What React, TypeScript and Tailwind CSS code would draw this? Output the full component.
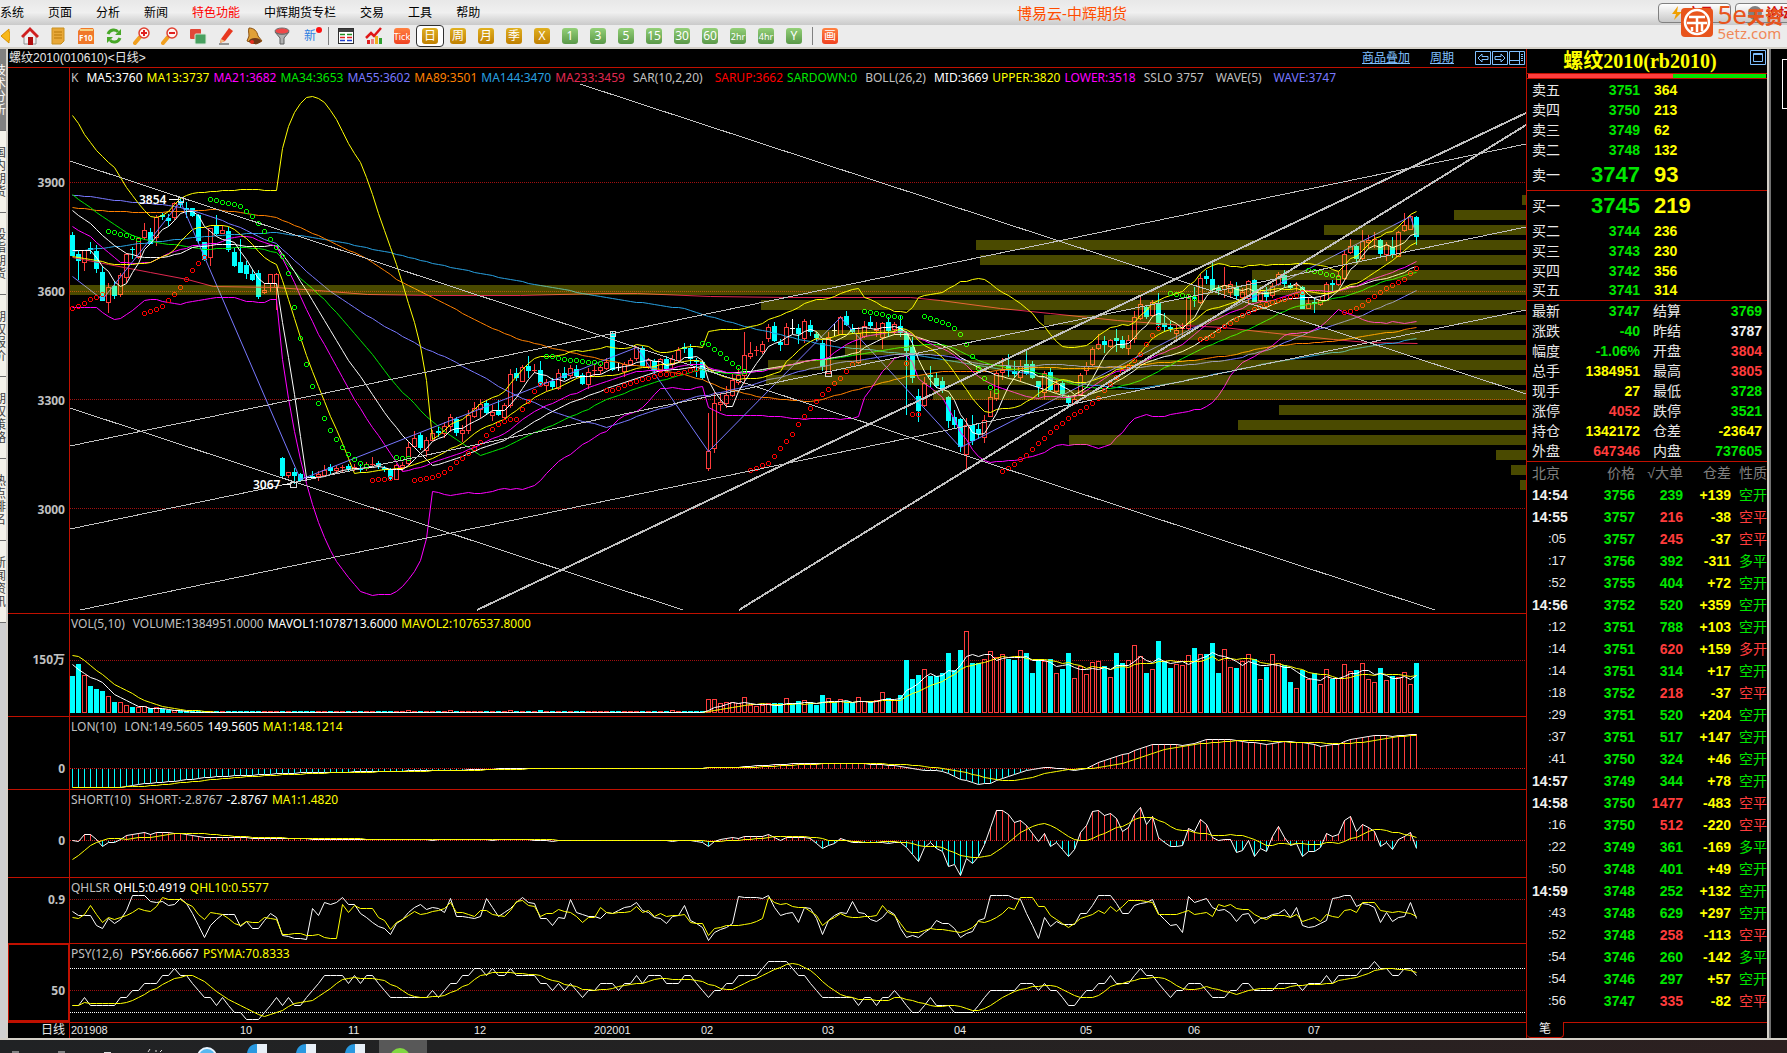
import type { ReactNode } from "react"
import clsx from "clsx"

type Point = [number, number]
// high, body top, body bottom, low (chart y) and kind: u = up, d = down, x = doji
type Candle = [number, number, number, number, string]

const BAR_COUNT = 225
const CHART_LEFT = 70
const CHART_WIDTH = 1456
const RIGHT = CHART_LEFT + CHART_WIDTH

const barX = (i: number) => 72.5 + i * 6

const candleData = `
232,235,256,256,d 251,254,261,280,d 250,250,262,271,u 242,248,250,254,d 245,251,269,273,d 266,272,301,301,d 283,287,302,313,u 281,286,296,299,d
273,275,294,297,u 253,254,277,283,u 247,249,250,259,d 237,238,257,259,u 223,230,237,240,u 228,232,244,244,d 215,217,237,246,u 213,215,217,220,d
214,218,221,226,d 202,203,217,220,u 197,201,205,208,d 202,208,210,218,d 208,208,216,217,d 214,215,241,243,d 242,242,260,261,d 228,228,257,266,u
215,226,234,235,d 225,230,233,234,u 227,231,250,252,d 248,252,266,267,d 239,262,273,273,d 261,265,274,279,d 269,274,280,281,d 270,273,297,299,d
283,290,292,294,u 274,274,283,292,u 273,274,287,310,u 457,458,476,477,d 472,472,475,478,u 468,472,476,484,d 473,474,481,482,d 476,477,478,481,x
471,476,477,478,d 471,474,476,481,u 465,470,475,477,u 464,467,471,475,d 466,468,470,474,u 465,467,468,473,u 464,466,469,471,d 464,467,468,471,u
464,468,470,473,d 462,464,468,471,u 457,464,465,467,u 461,463,466,469,d 466,468,470,472,d 468,469,479,480,d 464,465,479,480,u 462,465,467,471,u
442,447,463,465,u 431,438,446,448,u 433,435,448,450,d 437,440,450,457,u 430,433,440,441,u 427,431,433,437,d 422,426,433,438,u 414,417,426,432,u
417,419,433,436,d 425,430,433,442,u 410,415,430,434,u 402,408,416,418,u 399,404,409,418,u 400,403,413,415,d 405,412,415,421,u 400,410,415,416,d
403,405,417,419,u 369,374,405,408,u 368,373,378,381,d 365,367,381,381,u 356,366,371,378,d 364,370,371,373,u 361,370,384,385,d 379,382,385,391,u
378,381,387,390,d 369,373,388,390,u 367,373,378,380,d 365,368,375,378,u 365,369,376,378,d 373,375,384,385,d 368,372,384,389,u 365,370,371,376,u
364,367,370,374,u 358,362,368,370,u 331,334,370,371,d 363,367,368,371,x 362,364,371,377,u 358,360,364,366,u 346,347,358,361,u 346,348,366,366,d
358,360,366,369,u 359,361,371,372,d 358,359,371,372,u 356,359,369,370,d 355,359,364,369,u 347,350,360,362,u 343,347,349,353,d 344,348,359,364,d
358,360,362,377,d 361,362,378,380,d 413,451,468,471,u 392,403,448,453,u 393,402,404,411,u 386,395,403,408,u 374,380,395,397,u 368,375,382,385,u
332,355,375,384,u 342,353,356,359,u 346,350,351,356,u 341,344,351,354,u 324,327,338,342,u 322,326,341,342,d 339,342,345,351,d 323,327,344,345,u
319,328,329,334,x 324,328,334,344,d 319,321,338,343,u 320,325,332,336,d 332,334,338,341,d 340,343,367,371,d 332,337,373,374,u 324,330,331,336,x
316,317,334,335,u 311,316,325,326,d 324,329,332,334,d 327,333,362,364,u 321,326,336,338,u 316,322,326,328,d 322,328,330,337,u 322,323,337,349,u
317,322,331,337,d 322,324,329,335,u 315,326,333,337,d 331,333,351,415,d 337,347,378,383,d 389,396,411,422,d 377,383,405,407,u 366,375,377,387,d
372,378,386,388,d 377,381,390,393,d 396,397,421,428,d 410,417,425,428,d 418,419,447,452,d 418,425,454,471,u 415,425,441,445,d 424,429,434,439,d
415,420,437,443,u 391,397,416,417,u 371,373,398,401,u 358,370,372,380,u 354,366,369,377,d 361,371,374,378,d 360,366,377,382,u 351,364,374,375,d
361,364,378,379,d 381,381,387,397,d 371,373,392,399,u 368,372,390,391,d 380,384,391,393,u 381,383,394,397,d 395,397,403,408,d 396,399,403,405,u
373,375,394,396,u 362,366,370,375,u 347,349,364,367,u 334,344,348,350,u 336,341,345,353,d 339,340,346,348,u 329,338,341,352,d 336,340,348,349,d
335,340,348,355,u 311,317,338,343,u 297,304,318,320,u 305,307,317,319,d 300,302,315,317,u 293,303,325,328,d 313,323,327,332,d 321,327,329,332,d
325,330,333,339,u 323,328,329,337,u 295,297,328,330,u 287,297,299,307,d 274,278,302,304,u 270,276,279,284,d 263,279,290,292,d 285,288,291,295,d
267,285,289,298,u 281,284,292,297,u 282,287,296,299,d 288,292,297,300,u 280,281,298,305,u 279,280,302,302,d 290,292,300,303,u 287,292,297,301,d
283,286,295,298,u 272,274,284,286,u 270,275,284,287,d 283,285,288,289,d 282,285,286,291,u 286,287,309,309,d 297,303,308,309,u 298,302,304,313,d
297,300,304,306,u 282,284,300,301,u 280,283,285,291,d 272,276,284,286,u 251,254,278,280,u 239,246,252,254,u 245,246,259,262,d 230,241,258,260,u
235,240,242,248,u 232,239,240,248,u 239,240,254,258,d 242,245,254,261,u 237,247,255,258,d 231,232,256,257,u 213,225,230,232,u 215,216,229,230,u
216,217,237,245,d`

const candles: Candle[] = candleData
  .trim()
  .split(/\s+/)
  .map((row) => {
    const [high, top, bottom, low, kind] = row.split(",")
    return [+high, +top, +bottom, +low, kind]
  })

const closes = candles.map(([, top, bottom, , kind]) => (kind === "u" ? top : bottom))

function interpolate(points: Point[], x: number) {
  const next = points.findIndex((p) => p[0] >= x)
  if (next === -1) return points[points.length - 1][1]
  if (next === 0) return points[0][1]
  const [x0, y0] = points[next - 1]
  const [x1, y1] = points[next]
  return y0 + ((y1 - y0) * (x - x0)) / (x1 - x0)
}

function average(values: number[], i: number, period: number) {
  const part = values.slice(Math.max(0, i - period + 1), i + 1)
  return part.reduce((sum, v) => sum + v, 0) / part.length
}

// Moving average; `early` covers the bars that lack a full window
function movingAverage(values: number[], period: number, early: Point[] = []): Point[] {
  return values.map((_, i) => {
    const x = barX(i)
    const known = early.length > 0 && i < Math.max(period - 1, 0)
    return [x, known ? interpolate(early, x) : average(values, i, period)]
  })
}

function bollinger(side: number, early: Point[]): Point[] {
  return closes.map((_, i) => {
    const x = barX(i)
    if (i < 35) return [x, interpolate(early, x)]
    const part = closes.slice(i - 25, i + 1)
    const mean = part.reduce((s, v) => s + v, 0) / 26
    const deviation = Math.sqrt(part.reduce((s, v) => s + (v - mean) ** 2, 0) / 25)
    return [x, mean + side * 2 * deviation]
  })
}

const ma5 = movingAverage(closes, 5, [[72, 250], [90, 250]])
const ma13 = movingAverage(closes, 13, [[72, 256], [96, 260], [114, 264], [132, 264], [150, 262]])
const ma21 = movingAverage(closes, 21, [[72, 226], [90, 236], [102, 247], [120, 262], [138, 263], [150, 262], [168, 253], [192, 246]])
const mid = movingAverage(closes, 26, [[72, 210], [90, 223], [108, 240], [126, 253], [144, 257], [162, 257], [180, 253], [192, 247], [210, 245], [222, 244]])
const ma34 = movingAverage(closes, 34, [[72, 194], [90, 207], [108, 220], [126, 232], [144, 239], [162, 243], [180, 245], [204, 249], [222, 248], [240, 247], [258, 248], [276, 252]])
const ma55 = movingAverage(closes, 55, [[72, 195], [90, 196], [108, 199], [126, 201], [162, 204], [180, 207], [198, 212], [216, 218], [240, 227], [258, 236], [276, 243], [300, 265], [333, 293], [367, 315], [400, 335], [436, 351]])
const ma89 = movingAverage(closes, 89, [[72, 207], [108, 211], [150, 212], [180, 211], [216, 209], [246, 213], [276, 217], [300, 227], [333, 242], [368, 259], [400, 281], [433, 297], [467, 315], [493, 328], [520, 339], [554, 348], [593, 357], [606, 359]])
const ma144 = movingAverage(closes, 144, [[72, 251], [108, 247], [150, 242], [187, 238], [216, 235], [276, 232], [333, 240], [393, 253], [433, 263], [467, 270], [520, 281], [600, 296], [653, 304], [683, 308], [713, 317], [750, 327], [800, 339], [833, 346], [867, 349], [900, 353], [930, 357]])
const ma233: Point[] = [[72, 257], [108, 264], [150, 272], [187, 279], [213, 286], [276, 287], [317, 290], [367, 294], [433, 295], [520, 295], [600, 293], [637, 293], [710, 296], [787, 297], [910, 297], [940, 300], [1000, 308], [1050, 313], [1117, 320], [1183, 325], [1223, 327], [1267, 332], [1333, 339], [1367, 342], [1417, 343]]
const upper = bollinger(-1, [[72, 114], [78, 122], [84, 133], [96, 149], [108, 162], [114, 166], [126, 186], [138, 202], [150, 216], [156, 217], [162, 215], [168, 212], [180, 198], [192, 193], [204, 192], [222, 190], [252, 189], [276, 190]])
const lower = bollinger(1, [[72, 307], [96, 307], [108, 316], [114, 319], [120, 318], [132, 310], [144, 300], [156, 299], [168, 302], [180, 304], [186, 302], [204, 299], [216, 297], [234, 297], [246, 301], [264, 302], [270, 299], [276, 299]])
const wave: Point[] = [[72, 276], [102, 299], [180, 201], [300, 479], [636, 347], [708, 451], [840, 317], [960, 447], [1410, 216], [1416, 235]]

const sarRuns: { start: number; up: boolean; ys: number[] }[] = [
  { start: 0, up: false, ys: [308, 306, 303, 299, 297, 294] },
  { start: 6, up: true, ys: [231, 232, 234, 235, 237, 239] },
  { start: 12, up: false, ys: [313, 311, 309, 306, 300, 294, 287, 279, 270, 263, 257] },
  { start: 23, up: true, ys: [199, 200, 202, 203, 204, 206, 211, 216, 223, 231, 239, 247, 256, 273, 307, 338, 364, 386, 403, 418, 430, 439, 447, 454, 459, 463, 466] },
  { start: 50, up: false, ys: [480, 479, 479, 478] },
  { start: 54, up: true, ys: [457, 458, 458] },
  { start: 57, up: false, ys: [480, 479, 478, 477, 475, 472, 468, 462, 458, 453, 448, 442, 435, 429, 424, 421, 419, 419, 409, 401, 391, 384] },
  { start: 79, up: true, ys: [356, 356, 358, 359, 360, 360, 361, 362, 362, 363] },
  { start: 89, up: false, ys: [390, 390, 388, 385, 383, 381, 379, 378, 376, 374, 374, 374, 373, 372, 370, 369] },
  { start: 105, up: true, ys: [343, 344, 349, 353, 358, 363, 367, 371] },
  { start: 113, up: false, ys: [470, 468, 465, 463, 456, 448, 441, 434, 424, 416, 408, 401, 394, 389, 383, 378, 371, 364] },
  { start: 132, up: true, ys: [311, 312, 313, 314, 316, 316, 317] },
  { start: 139, up: false, ys: [363, 414, 414] },
  { start: 142, up: true, ys: [316, 318, 320, 322, 324, 328, 334, 344, 356, 368, 378, 387, 391] },
  { start: 155, up: false, ys: [471, 468, 464, 459, 455, 449, 443, 438, 432, 427, 423, 418, 414, 411, 407, 403, 398, 390, 384, 377, 371, 366, 360, 354, 344, 335, 328] },
  { start: 183, up: true, ys: [293, 294, 295, 296, 298] },
  { start: 188, up: false, ys: [339, 338, 335, 330, 326, 323, 319, 315, 312, 309, 306, 304, 302, 300, 299, 297, 295, 292] },
  { start: 206, up: true, ys: [270, 271, 272, 274, 275, 277] },
  { start: 212, up: false, ys: [312, 311, 308, 305, 300, 296, 292, 288, 285, 282, 279, 273, 268] },
]

// left edge of every price band, top to bottom, 15 apart
const profile = [1522, 1454, 1324, 976, 980, 1252, 70, 761, 1044, 815, 845, 768, 766, 933, 1279, 1238, 1069, 1496, 1511, 1520]

const trendLines = [
  [70, 161, 1435, 610],
  [70, 408, 683, 610],
  [580, 84, 1526, 394],
  [70, 446, 1526, 144],
  [70, 529, 1526, 227],
  [80, 610, 1526, 310],
]
const thickLines = [
  [477, 610, 1526, 113],
  [739, 610, 1526, 125],
]

const volumes = [
  36, 48, 37, 26, 23, 21, 16, 10, 10, 7, 5, 5, 6, 4, 5, 3, 2, 2,
  ...Array.from({ length: 88 }, (_, k) => ([38, 45, 55, 60, 82].includes(k) ? 2 : 1)),
  13, 13, 9, 10, 10, 9, 15, 7, 6, 7, 9, 9, 9, 14, 9, 11, 12, 10, 7, 17, 14, 10, 13, 11, 9, 15, 11, 11, 12, 20, 14, 12, 17,
  52, 33, 37, 43, 36, 36, 39, 59, 42, 62,
  81, 49, 49, 53, 61, 55, 58, 53, 52, 62,
  59, 39, 53, 51, 53, 39, 43, 59, 34, 46,
  38, 50, 51, 46, 35, 59, 49, 52, 67, 56,
  39, 43, 71, 51, 44, 48, 47, 57, 64, 58,
  58, 69, 39, 63, 45, 44, 51, 58, 53, 33,
  45, 58, 49, 47, 30, 24, 42, 33, 39, 28,
  43, 33, 34, 48, 41, 42, 49, 33, 30, 44,
  32, 36, 35, 40, 28, 49,
]
const volumeTops = volumes.map((v) => 713 - v)
const mavol1 = movingAverage(volumeTops, 5, [[72, 664], [84, 673], [96, 680]])
const mavol2 = movingAverage(volumeTops, 10, [[72, 655], [78, 656], [84, 660], [96, 670], [102, 674], [114, 684], [126, 690]])

const expand = (points: Point[]) => Array.from({ length: BAR_COUNT }, (_, i) => interpolate(points, i))

const lon = expand([
  [0, -18], [8, -18], [9, -17], [13, -14], [17, -12], [23, -8], [30, -6], [37, -4], [46, -3], [55, -2], [65, -1], [76, 1],
  [105, 1], [111, 2], [116, 4], [123, 6], [133, 5], [138, 3], [142, -1], [145, -2], [148, -10], [151, -15], [153, -14],
  [156, -7], [160, 0], [162, 2], [167, -1], [169, 1], [171, 7], [174, 13], [176, 16], [179, 23], [180, 25], [183, 25],
  [185, 24], [187, 26], [189, 30], [193, 30], [196, 27], [199, 25], [202, 28], [206, 26], [208, 23], [211, 25], [213, 30],
  [217, 34], [220, 33], [224, 35],
])

const short = [
  ...expand([
    [0, 1], [1, 0], [2, 7], [3, 7], [4, 2], [5, -5], [6, -1], [7, -1], [8, 2], [9, 6], [10, 7], [12, 9], [13, 7], [14, 9],
    [15, 9], [19, 7], [22, 4], [26, 4], [30, 3], [40, 2], [50, 2], [60, 1], [66, 2], [70, 1], [73, 2], [80, 0], [95, 1],
    [100, 0], [102, 1], [104, 0], [105, -1], [106, -5], [107, 0], [109, 3], [110, 4], [111, 3], [112, 5], [115, 5],
    [116, 7], [118, 1], [119, 4], [123, 3], [124, -2], [125, -7], [127, -2], [128, 3], [130, -1], [134, -1], [136, -2],
    [138, -1],
  ]).slice(0, 139),
  -6, -13, -20, -6, -1, -7, -10, -25, -23, -34, -17, -22, -15, -3, 14, 31, 31, 27, 19, 21, 16, 8, 0, 8, -5, -1, -8, -15,
  -8, 9, 16, 30, 31, 26, 28, 23, 10, 14, 27, 34, 17, 25, 4, -1, -5, -5, -4, 13, 10, 22, 17, 4, 1, 2, 2, -11, -9, 1, -15,
  -7, -10, 5, 15, 4, -4, -2, -15, -10, -10, -6, 8, 5, 7, 21, 25, 10, 17, 14, 10, -5, -1, -8, 2, 5, 9, -7,
]

const qhl5 = [
  911, 915, 915, 915, 925, 928, 918, 923, 919, 910, 895, 895, 895, 901, 902, 901, 905, 904, 898, 903, 913, 925, 937, 925,
  919, 914, 914, 914, 926, 921, 928, 928, 920, 913, 917, 935, 936, 938, 938, 939, 908, 915, 902, 904, 902, 897, 904, 904,
  913, 917, 922, 926, 928, 934, 923, 919, 912, 907, 904, 909, 907, 908, 912, 898, 916, 916, 917, 918, 916, 898, 907, 916,
  912, 908, 902, 897, 902, 903, 918, 918, 925, 917, 918, 899, 912, 914, 916, 916, 918, 912, 913, 910, 907, 906, 902, 910,
  912, 917, 918, 923, 916, 915, 905, 920, 923, 927, 940, 932, 929, 927, 923, 896, 897, 897, 897, 898, 895, 907, 915, 913,
  912, 922, 907, 908, 918, 934, 920, 915, 912, 913, 901, 912, 913, 919, 921, 917, 910, 914, 928, 937, 935, 937, 932, 928,
  920, 923, 923, 928, 937, 933, 931, 920, 918, 895, 895, 895, 895, 898, 899, 913, 925, 938, 917, 926, 921, 924, 924, 924,
  913, 913, 905, 895, 895, 895, 903, 913, 913, 905, 903, 902, 899, 913, 919, 925, 924, 932, 896, 902, 900, 898, 907, 910,
  909, 913, 921, 914, 913, 923, 918, 917, 914, 913, 909, 917, 907, 925, 927, 926, 923, 920, 898, 897, 895, 895, 906, 903,
  904, 907, 922, 912, 921, 917, 916, 902, 918,
]

const qhl10 = expand([
  [0, 917], [1, 918], [2, 914], [3, 905], [4, 914], [5, 922], [6, 917], [7, 919], [9, 915], [11, 908], [13, 911], [14, 906],
  [15, 897], [16, 899], [18, 899], [19, 903], [20, 906], [21, 914], [22, 919], [23, 912], [25, 914], [26, 918], [27, 923],
  [28, 925], [29, 921], [31, 922], [32, 917], [34, 919], [35, 934], [38, 933], [39, 935], [41, 934], [42, 937], [44, 938],
  [45, 904], [46, 912], [47, 905], [48, 908], [50, 908], [51, 917], [52, 920], [53, 929], [54, 922], [55, 919], [57, 911],
  [58, 914], [61, 910], [62, 908], [63, 902], [64, 912], [65, 912], [67, 916], [68, 910], [69, 910], [70, 914], [72, 916],
  [73, 910], [74, 901], [75, 900], [76, 905], [77, 906], [78, 916], [79, 913], [80, 913], [81, 909], [83, 912], [84, 916],
  [85, 922], [86, 917], [87, 917], [88, 907], [89, 912], [90, 913], [93, 911], [94, 906], [95, 912], [96, 910], [97, 916],
  [98, 913], [99, 916], [102, 914], [103, 922], [105, 923], [106, 935], [107, 928], [109, 925], [111, 925], [113, 923],
  [115, 918], [116, 897], [117, 902], [118, 904], [119, 903], [120, 906], [122, 907], [124, 915], [125, 925], [126, 920],
  [128, 913], [129, 916], [131, 917], [134, 915], [135, 905], [136, 912], [137, 915], [138, 923], [139, 931], [141, 932],
  [143, 928], [146, 930], [148, 932], [150, 927], [151, 921], [152, 922], [154, 917], [155, 913], [156, 907], [157, 909],
  [158, 897], [160, 897], [161, 906], [162, 906], [163, 915], [165, 923], [166, 927], [168, 918], [170, 914], [171, 910],
  [172, 913], [173, 906], [174, 911], [176, 900], [178, 900], [180, 902], [181, 914], [184, 914], [186, 910], [187, 914],
  [189, 912], [190, 916], [191, 904], [192, 906], [193, 904], [194, 908], [196, 909], [197, 914], [199, 919], [200, 915],
  [202, 915], [203, 917], [204, 914], [205, 921], [207, 917], [208, 921], [209, 914], [211, 917], [212, 910], [213, 909],
  [214, 912], [215, 902], [217, 902], [218, 910], [220, 912], [221, 911], [223, 913], [224, 916],
])

// rising days out of the last twelve, one hex digit per bar
const psyDays =
  "44544444556677788988765545433222345454456788887878876555555565677889989889888877" +
  "67676566777677878887778876566778888" +
  "9aaaa988765555554554556543345444333345666667776766544566778777898876566777655566776666777767778" +
  "7888899a9988998"
const psy = [...psyDays].map((digit) => 1034 - parseInt(digit, 16) * 7.33)

const toPoints = (values: number[], base = 0): Point[] => values.map((v, i) => [barX(i), base ? base - v : v])

// points sit on pixel centres so that flat stretches stay sharp
function Line({ points, color }: { points: Point[]; color: string }) {
  return (
    <polyline
      points={points.map(([x, y]) => `${Math.floor(x) + 0.5},${Math.round(y) + 0.5}`).join(" ")}
      fill="none"
      stroke={color}
      shapeRendering="auto"
    />
  )
}

function GridLine({ y, color = "#a01010" }: { y: number; color?: string }) {
  return <line x1={CHART_LEFT} x2={RIGHT} y1={y + 0.5} y2={y + 0.5} stroke={color} strokeDasharray="1 1" />
}

function Stems({ values, base }: { values: number[]; base: number }) {
  return (
    <>
      {values.map((v, i) => (
        <line key={i} x1={barX(i)} x2={barX(i)} y1={base} y2={base - v} stroke={v >= 0 ? "#ff3c3c" : "#00ffff"} />
      ))}
    </>
  )
}

function CandleShape({ candle, index }: { candle: Candle; index: number }) {
  const [high, top, bottom, low, kind] = candle
  const x = barX(index)
  if (kind === "x" || (kind === "u" && bottom - top < 2)) {
    const color = kind === "x" ? "#ffffff" : "#ff3c3c"
    return <path d={`M${x} ${high}V${low}M${x - 2.5} ${top + 0.5}H${x + 2.5}`} stroke={color} />
  }
  if (kind === "u") {
    return (
      <path
        d={`M${x} ${high}V${top}M${x} ${bottom}V${low}M${x - 2} ${top + 0.5}H${x + 2}V${bottom + 0.5}H${x - 2}Z`}
        fill="none"
        stroke="#ff3c3c"
      />
    )
  }
  return (
    <g>
      <line x1={x} x2={x} y1={high} y2={low} stroke="#00ffff" />
      <rect x={x - 2.5} y={top} width={5} height={bottom - top} fill="#00ffff" />
    </g>
  )
}

interface PanelProps {
  top: number
  height: number
  labels: string[]
  labelClass: string
  header: [string, string][]
  active?: boolean
  children: ReactNode
}

function Panel({ top, height, labels, labelClass, header, active, children }: PanelProps) {
  return (
    <section className="flex min-h-0 border-t border-[#c01000]">
      <div
        className={clsx(
          "flex w-[62px] shrink-0 flex-col border-[#c01000] text-right text-[12px] leading-[14px] font-bold text-[#c0c0c0]",
          active ? "border border-r-2 border-b-2 pr-[3px]" : "border-r pr-1",
          labelClass
        )}
      >
        {labels.map((label) => (
          <span key={label}>{label}</span>
        ))}
      </div>
      <div className="relative min-w-0 flex-1">
        <svg
          className="absolute inset-0 h-full w-full"
          viewBox={`${CHART_LEFT} ${top} ${CHART_WIDTH} ${height}`}
          preserveAspectRatio="none"
          shapeRendering="crispEdges"
        >
          {children}
        </svg>
        <p className="absolute top-[3px] left-px flex gap-1 text-[12px] leading-[14px] whitespace-nowrap">
          {header.map(([text, color], i) => (
            <span key={i} className={color}>
              {text}
            </span>
          ))}
        </p>
      </div>
    </section>
  )
}

const GRAY = "text-[#c0c0c0]"
const TITLE = "text-[#c0c0c0] mr-1"
const WHITE = "text-white"
const YELLOW = "text-[#ffff00]"
const MAGENTA = "text-[#ff00ff]"
const GREEN = "text-[#00e600]"
const RED = "text-[#ff3c3c]"

const mainHeader: [string, string][] = [
  ["K", TITLE],
  ["MA5:3760", WHITE],
  ["MA13:3737", YELLOW],
  ["MA21:3682", MAGENTA],
  ["MA34:3653", GREEN],
  ["MA55:3602", "text-[#7878ff]"],
  ["MA89:3501", "text-[#ff8000]"],
  ["MA144:3470", "text-[#28a0e0]"],
  ["MA233:3459", "text-[#e02850] mr-1"],
  ["SAR(10,2,20)", "text-[#c0c0c0] mr-2"],
  ["SARUP:3662", "text-[#ff0000]"],
  ["SARDOWN:0", "text-[#00e600] mr-1"],
  ["BOLL(26,2)", TITLE],
  ["MID:3669", WHITE],
  ["UPPER:3820", YELLOW],
  ["LOWER:3518", "text-[#ff00ff] mr-1"],
  ["SSLO", GRAY],
  ["3757", "text-[#c0c0c0] mr-2"],
  ["WAVE(5)", "text-[#c0c0c0] mr-2"],
  ["WAVE:3747", "text-[#7878ff]"],
]

function PriceChart() {
  return (
    <Panel
      top={68}
      height={545}
      labels={["3900", "3600", "3300", "3000"]}
      labelClass="gap-[95px] pt-[108px]"
      header={mainHeader}
    >
      {[182, 291, 399, 508].map((y) => (
        <GridLine key={y} y={y} />
      ))}
      {candles.map((candle, i) => (
        <CandleShape key={i} candle={candle} index={i} />
      ))}
      <Line points={ma233} color="#e02850" />
      <Line points={ma144} color="#28a0e0" />
      <Line points={ma89} color="#ff8000" />
      <Line points={ma55} color="#7878ff" />
      <Line points={ma34} color="#00e600" />
      <Line points={mid} color="#ffffff" />
      <Line points={ma21} color="#ff00ff" />
      <Line points={ma13} color="#ffff00" />
      <Line points={ma5} color="#ffffff" />
      <Line points={upper} color="#ffff00" />
      <Line points={lower} color="#ff00ff" />
      <Line points={wave} color="#7878ff" />
      {sarRuns.map((run) =>
        run.ys.map((y, k) => (
          <circle
            key={`${run.start}-${k}`}
            cx={barX(run.start + k)}
            cy={y + 0.5}
            r={2}
            fill="none"
            stroke={run.up ? "#00ff00" : "#ff0000"}
          />
        ))
      )}
      {profile.map((x, i) => (
        <rect key={i} x={x} y={195 + i * 15} width={RIGHT - x} height={10} fill="#ffff00" opacity={0.29} />
      ))}
      {trendLines.map(([x1, y1, x2, y2], i) => (
        <line key={i} x1={x1} y1={y1} x2={x2} y2={y2} stroke="#c0c0c0" />
      ))}
      {thickLines.map(([x1, y1, x2, y2], i) => (
        <line key={i} x1={x1} y1={y1} x2={x2} y2={y2} stroke="#c0c0c0" strokeWidth={2} />
      ))}
      <path d="M169 199.5H178M283 484.5H290" stroke="#ffffff" />
      <path d="M178 197h5v5h-5zM290 482h6v5h-6zM610 331h5v5h-5zM825 371h6v5h-6z" fill="none" stroke="#d8d8d8" />
      <text x={139} y={204} fill="#ffffff" fontSize={12} className="font-semibold">
        3854
      </text>
      <text x={253} y={489} fill="#ffffff" fontSize={12} className="font-semibold">
        3067
      </text>
    </Panel>
  )
}

function VolumeChart() {
  return (
    <Panel
      top={614}
      height={102}
      labels={["150万"]}
      labelClass="pt-[39px]"
      header={[
        ["VOL(5,10)", TITLE],
        ["VOLUME:1384951.0000", GRAY],
        ["MAVOL1:1078713.6000", WHITE],
        ["MAVOL2:1076537.8000", YELLOW],
      ]}
    >
      <GridLine y={660} />
      {volumes.map((v, i) =>
        candles[i][4] === "u" ? (
          <rect key={i} x={barX(i) - 2} y={712.5 - v} width={4} height={v} fill="none" stroke="#ff3c3c" />
        ) : (
          <rect key={i} x={barX(i) - 2.5} y={712 - v} width={5} height={v + 1} fill="#00ffff" />
        )
      )}
      <Line points={mavol2} color="#ffff00" />
      <Line points={mavol1} color="#ffffff" />
    </Panel>
  )
}

function LonChart() {
  return (
    <Panel
      top={717}
      height={72}
      labels={["0"]}
      labelClass="pt-[45px]"
      header={[
        ["LON(10)", TITLE],
        ["LON:149.5605", GRAY],
        ["149.5605", WHITE],
        ["MA1:148.1214", YELLOW],
      ]}
    >
      <GridLine y={768} color="#d01818" />
      <Stems values={lon} base={768.5} />
      <Line points={toPoints(lon, 768.5)} color="#ffffff" />
      <Line points={movingAverage(lon.map((v) => 768.5 - v), 10)} color="#ffff00" />
    </Panel>
  )
}

function ShortChart() {
  return (
    <Panel
      top={790}
      height={87}
      labels={["0"]}
      labelClass="pt-[44px]"
      header={[
        ["SHORT(10)", TITLE],
        ["SHORT:-2.8767", GRAY],
        ["-2.8767", WHITE],
        ["MA1:1.4820", YELLOW],
      ]}
    >
      <GridLine y={840} color="#d01818" />
      <Stems values={short} base={840.5} />
      <Line points={toPoints(short, 840.5)} color="#ffffff" />
      <Line
        points={movingAverage(short.map((v) => 840.5 - v), 10, [[72, 859], [78, 855], [84, 850], [90, 845], [108, 838], [126, 838]])}
        color="#ffff00"
      />
    </Panel>
  )
}

function QhlsrChart() {
  return (
    <Panel
      top={878}
      height={65}
      labels={["0.9"]}
      labelClass="pt-[15px]"
      header={[
        ["QHLSR", GRAY],
        ["QHL5:0.4919", WHITE],
        ["QHL10:0.5577", YELLOW],
      ]}
    >
      <GridLine y={899} />
      <Line points={toPoints(qhl5)} color="#ffffff" />
      <Line points={toPoints(qhl10)} color="#ffff00" />
    </Panel>
  )
}

function PsyChart() {
  return (
    <Panel
      top={944}
      height={78}
      labels={["50"]}
      labelClass="pt-[39px]"
      active
      header={[
        ["PSY(12,6)", TITLE],
        ["PSY:66.6667", WHITE],
        ["PSYMA:70.8333", YELLOW],
      ]}
    >
      <GridLine y={968} color="#ffffff" />
      <GridLine y={990} />
      <GridLine y={1012} color="#ffffff" />
      <Line points={toPoints(psy)} color="#ffffff" />
      <Line points={movingAverage(psy, 6)} color="#ffff00" />
    </Panel>
  )
}

// month label and the chart x where it starts
const months: [string, number][] = [
  ["201908", 70], ["10", 239], ["11", 347], ["12", 473], ["202001", 593], ["02", 700], ["03", 821], ["04", 953], ["05", 1079], ["06", 1187], ["07", 1307],
]

function TimeAxis() {
  return (
    <div className="flex border-t border-[#c01000] font-['Liberation_Sans','Noto_Sans_CJK_SC',sans-serif] text-[11px] leading-[15px] text-[#e8e8e8]">
      <span className="w-[62px] shrink-0 border-r border-[#c01000] pr-1 text-right text-[12px]">日线</span>
      <div className="flex min-w-0 flex-1">
        {months.map(([label, x], i) => (
          <span
            key={label}
            className="shrink-0 pl-px"
            style={{ width: `${(((months[i + 1]?.[1] ?? RIGHT) - x) / CHART_WIDTH) * 100}%` }}
          >
            {label}
          </span>
        ))}
      </div>
    </div>
  )
}

function ChartArea() {
  return (
    <main className="grid min-w-0 flex-1 grid-rows-[18px_546fr_103fr_73fr_88fr_66fr_79fr_16px] bg-black">
      <div className="flex items-center font-['Liberation_Sans','Noto_Sans_CJK_SC',sans-serif] text-[12px] leading-[16px] text-[#e8e8e8]">
        <h1 className="pl-px">螺纹2010(010610)&lt;日线&gt;</h1>
        <a href="#overlay" className="mr-5 ml-auto text-[#80c0ff] underline">
          商品叠加
        </a>
        <a href="#period" className="mr-[21px] text-[#80c0ff] underline">
          周期
        </a>
        <button type="button" aria-label="左移" className="text-[#80c0ff]">
          <svg width="17" height="15" viewBox="0 0 17 15" fill="none" stroke="currentColor">
            <path d="M.5 .5h15v13H.5zM3 7l4-4v2.500h6v3H7V11z" />
          </svg>
        </button>
        <button type="button" aria-label="右移" className="text-[#80c0ff]">
          <svg width="17" height="15" viewBox="0 0 17 15" fill="none" stroke="currentColor">
            <path d="M.5 .5h15v13H.5zM13 7L9 3v2.500H3v3h6V11z" />
          </svg>
        </button>
        <button type="button" aria-label="布局" className="text-[#80c0ff]">
          <svg width="17" height="15" viewBox="0 0 17 15" fill="none" stroke="currentColor">
            <path d="M.5 .5h15v13H.5zM10.500 .5v13M.5 9.500h10M12 3.500h2M12 5.500h2M12 7.500h2M12 9.500h2" />
          </svg>
        </button>
      </div>
      <PriceChart />
      <VolumeChart />
      <LonChart />
      <ShortChart />
      <QhlsrChart />
      <PsyChart />
      <TimeAxis />
    </main>
  )
}

const asks = [
  ["卖五", "3751", "364"],
  ["卖四", "3750", "213"],
  ["卖三", "3749", "62"],
  ["卖二", "3748", "132"],
  ["卖一", "3747", "93"],
]
const bids = [
  ["买一", "3745", "219"],
  ["买二", "3744", "236"],
  ["买三", "3743", "230"],
  ["买四", "3742", "356"],
  ["买五", "3741", "314"],
]

const stats = [
  ["最新", "3747", GREEN, "结算", "3769", GREEN],
  ["涨跌", "-40", GREEN, "昨结", "3787", "text-[#f0f0f0]"],
  ["幅度", "-1.06%", GREEN, "开盘", "3804", RED],
  ["总手", "1384951", YELLOW, "最高", "3805", RED],
  ["现手", "27", YELLOW, "最低", "3728", GREEN],
  ["涨停", "4052", RED, "跌停", "3521", GREEN],
  ["持仓", "1342172", YELLOW, "仓差", "-23647", YELLOW],
  ["外盘", "647346", RED, "内盘", "737605", GREEN],
]

// time, price, size, open interest change, kind
const ticks = [
  ["14:54", "3756", "239", "+139", "空开"],
  ["14:55", "3757", "216", "-38", "空平"],
  [":05", "3757", "245", "-37", "空平"],
  [":17", "3756", "392", "-311", "多平"],
  [":52", "3755", "404", "+72", "空开"],
  ["14:56", "3752", "520", "+359", "空开"],
  [":12", "3751", "788", "+103", "空开"],
  [":14", "3751", "620", "+159", "多开"],
  [":14", "3751", "314", "+17", "空开"],
  [":18", "3752", "218", "-37", "空平"],
  [":29", "3751", "520", "+204", "空开"],
  [":37", "3751", "517", "+147", "空开"],
  [":41", "3750", "324", "+46", "空开"],
  ["14:57", "3749", "344", "+78", "空开"],
  ["14:58", "3750", "1477", "-483", "空平"],
  [":16", "3750", "512", "-220", "空平"],
  [":22", "3749", "361", "-169", "多平"],
  [":50", "3748", "401", "+49", "空开"],
  ["14:59", "3748", "252", "+132", "空开"],
  [":43", "3748", "629", "+297", "空开"],
  [":52", "3748", "258", "-113", "空平"],
  [":54", "3746", "260", "-142", "多平"],
  [":54", "3746", "297", "+57", "空开"],
  [":56", "3747", "335", "-82", "空平"],
]

function DepthTable({ rows, best }: { rows: string[][]; best: string }) {
  return (
    <table className="w-full table-fixed border-b border-[#c01000] text-[14px] leading-none">
      <colgroup>
        <col className="w-10" />
        <col className="w-[73px]" />
        <col />
      </colgroup>
      <tbody>
        {rows.map(([label, price, size]) => {
          const big = label === best
          return (
            <tr key={label} className={big ? "h-[30px]" : "h-5"}>
              <th scope="row" className="p-0 pl-[5px] text-left font-normal text-[#e8e8e8]">
                {label}
              </th>
              <td className={clsx("p-0 text-right font-bold", GREEN, big && "text-[22px]")}>{price}</td>
              <td className={clsx("p-0 pl-[14px] font-bold", YELLOW, big && "text-[22px]")}>{size}</td>
            </tr>
          )
        })}
      </tbody>
    </table>
  )
}

function QuotePanel() {
  return (
    <aside className="flex w-[241px] shrink-0 flex-col border-l border-[#c01000] bg-black">
      <div className="relative flex h-6 items-center justify-center pr-[14px]">
        <h2 className="font-['Liberation_Serif','Noto_Sans_CJK_SC',serif] text-[20px] leading-6 font-bold text-[#ffff00]">
          螺纹2010(rb2010)
        </h2>
        <button type="button" aria-label="放大" className="absolute top-px right-px text-[#80c0ff]">
          <svg width="16" height="15" viewBox="0 0 16 15" fill="none" stroke="currentColor">
            <path d="M.5 .5h15v14H.5zM3.500 3.500h9v8h-9zM3.500 4.500h9" />
          </svg>
        </button>
      </div>
      <div className="mb-px flex h-[6px] border-y border-[#c01000] px-px">
        <div className="flex-[145] bg-[#ff3c3c]" />
        <div className="flex-[93] bg-[#00e600]" />
      </div>
      <DepthTable rows={asks} best="卖一" />
      <DepthTable rows={bids} best="买一" />
      <table className="w-full table-fixed border-b border-[#c01000] text-[14px] leading-none">
        <colgroup>
          <col className="w-10" />
          <col className="w-[73px]" />
          <col className="w-[50px]" />
          <col />
        </colgroup>
        <tbody>
          {stats.map(([label, value, color, label2, value2, color2]) => (
            <tr key={label} className="h-5">
              <th scope="row" className="p-0 pl-[5px] text-left font-normal text-[#e8e8e8]">
                {label}
              </th>
              <td className={clsx("p-0 text-right font-bold", color)}>{value}</td>
              <th scope="row" className="p-0 pl-[13px] text-left font-normal text-[#e8e8e8]">
                {label2}
              </th>
              <td className={clsx("p-0 pr-[5px] text-right font-bold", color2)}>{value2}</td>
            </tr>
          ))}
        </tbody>
      </table>
      <table className="w-full table-fixed text-[14px] leading-none whitespace-nowrap">
        <colgroup>
          <col className="w-11" />
          <col className="w-16" />
          <col className="w-12" />
          <col className="w-12" />
          <col />
        </colgroup>
        <thead>
          <tr className="h-[22px] text-right text-[#808080]">
            <th className="p-0 pl-[5px] text-left font-normal">北京</th>
            <th className="p-0 font-normal">价格</th>
            <th className="p-0 font-normal">√大单</th>
            <th className="p-0 font-normal">仓差</th>
            <th className="p-0 font-normal">性质</th>
          </tr>
        </thead>
        <tbody>
          {ticks.map(([time, price, size, change, kind], i) => {
            const sideColor = kind === "空平" || kind === "多开" ? RED : GREEN
            return (
              <tr key={i} className="h-[22px] text-right font-bold">
                {time.startsWith(":") ? (
                  <td className="p-0 pr-[5px] text-[13px] font-normal text-[#e8e8e8]">{time}</td>
                ) : (
                  <td className="p-0 pl-[5px] text-left text-[#f0f0f0]">{time}</td>
                )}
                <td className={clsx("p-0", GREEN)}>{price}</td>
                <td className={clsx("p-0", sideColor)}>{size}</td>
                <td className={clsx("p-0", YELLOW)}>{change}</td>
                <td className={clsx("p-0 font-normal", sideColor)}>{kind}</td>
              </tr>
            )
          })}
        </tbody>
      </table>
      <div className="mt-auto flex h-4 text-[12px] leading-[15px] text-[#f0f0f0]">
        <button type="button" className="w-[37px] rounded-b-sm border-r border-b border-[#c01000]">
          笔
        </button>
        <div className="flex-1 border-t border-[#c01000]" />
      </div>
    </aside>
  )
}

const sideTabs = ["技术分析", "国内期货", "股指期货", "期权报价", "期权策略", "热点排名", "新闻资讯"]

function SideTabs() {
  return (
    <nav className="w-2 shrink-0 overflow-hidden border-r-2 border-[#d4d0c8] bg-[#d0d0d0] text-[12px] leading-[13px]">
      {sideTabs.map((tab, i) => (
        <button
          key={tab}
          type="button"
          className={clsx(
            "flex h-[82px] w-[6px] items-center justify-end border-b border-[#707070]",
            i === 0 ? "bg-[#808080] text-white" : "bg-[#f4f2ea] text-[#404040]"
          )}
        >
          <span className="w-3 shrink-0 break-all">{tab}</span>
        </button>
      ))}
    </nav>
  )
}

const menus = ["系统", "页面", "分析", "新闻", "特色功能", "中辉期货专栏", "交易", "工具", "帮助"]

function MenuBar() {
  return (
    <header className="relative flex h-[25px] shrink-0 items-center bg-linear-to-b from-[#e8e8e8] via-[#f0f0f0] to-[#cacaca] text-[12px] text-black">
      <nav className="flex gap-6">
        {menus.map((menu) => (
          <button key={menu} type="button" className={menu === "特色功能" ? "text-[#ff0000]" : ""}>
            {menu}
          </button>
        ))}
      </nav>
      <p className="absolute inset-x-0 text-center text-[15px] leading-5 text-[#ff4d00]">
        <span className="ml-[357px]">博易云-中辉期货</span>
      </p>
      <div className="ml-auto flex h-5 w-[129px] gap-1 overflow-hidden text-[13px] font-bold text-[#d01010]">
        <button
          type="button"
          className="flex w-[73px] shrink-0 items-center gap-1 rounded border border-[#808080] bg-linear-to-b from-white to-[#c8c8c8] pl-3"
        >
          <svg width="12" height="14" viewBox="0 0 12 14" fill="#f0a000">
            <path d="M7 0L1 8h4l-2 6 8-8H6z" />
          </svg>
          交易
        </button>
        <button
          type="button"
          className="flex w-[73px] shrink-0 items-center gap-1 rounded border border-[#808080] bg-linear-to-b from-white to-[#c8c8c8] pl-3"
        >
          <svg width="14" height="14" viewBox="0 0 14 14" fill="#808080">
            <circle cx="7" cy="7" r="7" />
          </svg>
          <span className="shrink-0">论坛</span>
        </button>
      </div>
    </header>
  )
}

function Watermark() {
  return (
    <div className="absolute top-1 right-1 flex items-center gap-1 text-[#e8541c]">
      <svg width="32" height="30" viewBox="0 0 32 30" fill="none">
        <rect width="32" height="29" y="1" rx="4" fill="#e8541c" />
        <circle cx="16" cy="15" r="12" stroke="#fff" strokeWidth="2.500" />
        <path d="M8 10h16M6 16h20M16 10v15M11 20v4M21 17v7" stroke="#fff" strokeWidth="2.500" />
      </svg>
      <div>
        <p className="flex items-baseline text-[18px] leading-5 font-black">
          <span className="text-[26px] font-normal">5e</span>天资
        </p>
        <p className="text-[15px] leading-3 text-[#f08858]">5etz.com</p>
      </div>
    </div>
  )
}

function ToolButton({ label, children }: { label: string; children: ReactNode }) {
  return (
    <button type="button" aria-label={label} className="flex w-7 shrink-0 items-center justify-center">
      <svg width="18" height="18" viewBox="0 0 18 18" fill="none">
        {children}
      </svg>
    </button>
  )
}

function TextButton({ label, color, small }: { label: string; color: string; small?: boolean }) {
  const active = label === "日"
  return (
    <button
      type="button"
      className={clsx(
        "flex h-[22px] w-7 shrink-0 items-center justify-center",
        active && "rounded border border-[#303030] bg-white"
      )}
    >
      <span
        className={clsx(
          "flex h-4 w-4 items-center justify-center rounded-[3px] leading-none text-white",
          small ? "text-[9px]" : "text-[12px]",
          color
        )}
      >
        {label}
      </span>
    </button>
  )
}

const GOLD = "bg-linear-to-b from-[#e0b020] to-[#c08000]"
const LIME = "bg-linear-to-b from-[#94d078] to-[#5a9848]"
const ORANGE = "bg-linear-to-b from-[#ff8040] to-[#f04020]"

function Toolbar() {
  return (
    <div className="flex h-[22px] shrink-0 items-center bg-[#ececec]">
      <button type="button" aria-label="后退" className="flex w-[16px] shrink-0 justify-start">
        <svg width="10" height="16" viewBox="0 0 10 16">
          <path d="M0 4h1V1l8 7-8 7v-3H0z" fill="#f8b818" transform="matrix(-1 0 0 1 10 0)" stroke="#d89000" />
        </svg>
      </button>
      <ToolButton label="主页">
        <path d="M3 8l6-5 6 5v9H3z" fill="#f0f0f0" stroke="#909090" />
        <path d="M0 9l9-9 9 9-2 2-7-7-7 7z" fill="#d02020" />
        <path d="M7 10h5v8H7z" fill="#b01010" />
      </ToolButton>
      <ToolButton label="记事">
        <path d="M3 1h12v13l-3 3H3z" fill="#e8a838" stroke="#c89020" />
        <path d="M5 5h8M5 8h8M5 11h8" stroke="#b87808" />
      </ToolButton>
      <ToolButton label="资料">
        <path d="M1 4l3-3h12l1 2v14H1z" fill="#f07828" />
        <path d="M3 3h13" stroke="#f8d080" strokeWidth="2" />
        <text x="2" y="14" fontSize="8" fill="#fff" className="font-bold">
          F10
        </text>
      </ToolButton>
      <ToolButton label="刷新">
        <path d="M3 7c2-5 8-5 10-2M15 11c-2 5-8 5-10 2" stroke="#48a828" strokeWidth="3" />
        <path d="M16 2v6h-6zM2 16v-6h6z" fill="#48a828" />
      </ToolButton>
      <ToolButton label="放大">
        <path d="M2 16l5-6" stroke="#f0a020" strokeWidth="4" strokeLinecap="round" />
        <circle cx="11" cy="6" r="5" fill="#fff4f0" stroke="#e04030" strokeWidth="1.500" />
        <path d="M8 6h6M11 3v6" stroke="#e02020" strokeWidth="2" />
      </ToolButton>
      <ToolButton label="缩小">
        <path d="M2 16l5-6" stroke="#f0a020" strokeWidth="4" strokeLinecap="round" />
        <circle cx="11" cy="6" r="5" fill="#fff4f0" stroke="#e04030" strokeWidth="1.500" />
        <path d="M8 6h6" stroke="#e02020" strokeWidth="2" />
      </ToolButton>
      <ToolButton label="叠加">
        <rect x="1" y="2" width="11" height="10" rx="1" fill="#e04838" />
        <rect x="6" y="7" width="11" height="10" rx="1" fill="#48a060" stroke="#d8e8d8" />
      </ToolButton>
      <ToolButton label="画线">
        <path d="M4 12L12 1l4 3-8 10-5 2z" fill="#e83820" />
        <path d="M4 12l4 2-5 2z" fill="#f0c080" />
        <path d="M2 17h10" stroke="#404040" />
      </ToolButton>
      <ToolButton label="预警">
        <path d="M4 1c5 0 8 3 9 8l4 5-6 3-9-3 2-5c0-3-1-5 0-8z" fill="#e0a038" stroke="#8a5010" />
        <ellipse cx="10" cy="14" rx="6" ry="3" fill="#703818" />
        <circle cx="7" cy="15" r="2" fill="#e83020" />
      </ToolButton>
      <ToolButton label="筛选">
        <path d="M2 5l5 6v6h4v-6l5-6c-3 3-11 3-14 0z" fill="#b0b0b0" stroke="#606060" />
        <ellipse cx="9" cy="4" rx="7" ry="3" fill="#f04848" stroke="#707070" />
      </ToolButton>
      <button type="button" className="relative w-7 shrink-0 text-[12px] leading-4 text-[#3080e0]">
        新
        <span className="absolute -top-px right-[2px] size-[6px] rounded-full bg-[#ff1010]" />
      </button>
      <span className="flex w-2 shrink-0 justify-center">
        <span className="h-[18px] w-px bg-[#808080]" />
      </span>
      <ToolButton label="报价">
        <rect x="1.500" y="1.500" width="15" height="15" fill="#fff" stroke="#303030" />
        <path d="M2 3.500h14" stroke="#404040" strokeWidth="3" />
        <path d="M3 7.500h5M10 7.500h5" stroke="#209020" strokeWidth="1.500" />
        <path d="M3 10.500h5M10 10.500h5" stroke="#e02020" strokeWidth="1.500" />
        <path d="M3 13.500h5M10 13.500h5" stroke="#2040d0" strokeWidth="1.500" />
      </ToolButton>
      <ToolButton label="走势">
        <path d="M2 17v-4h3v4z" fill="#e02020" />
        <path d="M6 17v-5h3v5z" fill="#f08080" />
        <path d="M10 17V9h3v8z" fill="#f0b020" />
        <path d="M14 17v-6h3v6z" fill="#30a030" />
        <path d="M1 11l5-5 3 3 7-8" stroke="#e01818" strokeWidth="2.500" />
      </ToolButton>
      <TextButton label="Tick" color={ORANGE} small />
      {["日", "周", "月", "季", "X"].map((label) => (
        <TextButton key={label} label={label} color={GOLD} />
      ))}
      {["1", "3", "5", "15", "30", "60"].map((label) => (
        <TextButton key={label} label={label} color={LIME} />
      ))}
      <TextButton label="2hr" color={LIME} small />
      <TextButton label="4hr" color={LIME} small />
      <TextButton label="Y" color={LIME} />
      <span className="flex w-2 shrink-0 justify-center">
        <span className="h-[18px] w-px bg-[#808080]" />
      </span>
      <TextButton label="画" color={ORANGE} />
    </div>
  )
}

function Taskbar() {
  return (
    <footer className="flex h-[13px] shrink-0 items-end overflow-hidden bg-linear-to-r from-[#202224] via-[#242222] to-[#2c2020]">
      <svg width="430" height="13" viewBox="0 0 430 13" className="shrink-0">
        <rect x="379" width="48" height="13" fill="#585858" />
        <path d="M12 12h7M58 12h7M104 12.500h7M148 12l2-3M156 12v-2M160 12l2-2" stroke="#e0e0e0" />
        <circle cx="207" cy="17" r="9" fill="#58b8f0" stroke="#e8f4ff" strokeWidth="2" />
        {[257, 306, 355].map((x) => (
          <g key={x}>
            <path d={`M${x - 10} 13c1-6 5-9 10-9v9z`} fill="#2898e0" />
            <path d={`M${x} 4h10v9H${x}z`} fill="#e8f0f8" />
          </g>
        ))}
        <circle cx="400" cy="18" r="10" fill="#80d840" />
      </svg>
    </footer>
  )
}

export default function App() {
  return (
    <div className="relative flex h-screen w-full flex-col overflow-hidden bg-[#202020] font-['Noto_Sans','Noto_Sans_CJK_SC',sans-serif]">
      <MenuBar />
      <Toolbar />
      <div className="flex min-h-0 flex-1 border-y-2 border-[#d4d0c8]">
        <SideTabs />
        <ChartArea />
        <div className="flex shrink-0 font-['Liberation_Sans','Noto_Sans_CJK_SC',sans-serif]">
          <QuotePanel />
        </div>
        <div className="flex w-5 shrink-0 justify-end border-l-2 border-[#d4d0c8] bg-black">
          <div className="h-full w-full border-l-2 border-[#707070] pt-[10px]">
            <div className="ml-auto h-[50px] w-[5px] border border-r-0 border-white" />
          </div>
        </div>
      </div>
      <Taskbar />
      <Watermark />
    </div>
  )
}
